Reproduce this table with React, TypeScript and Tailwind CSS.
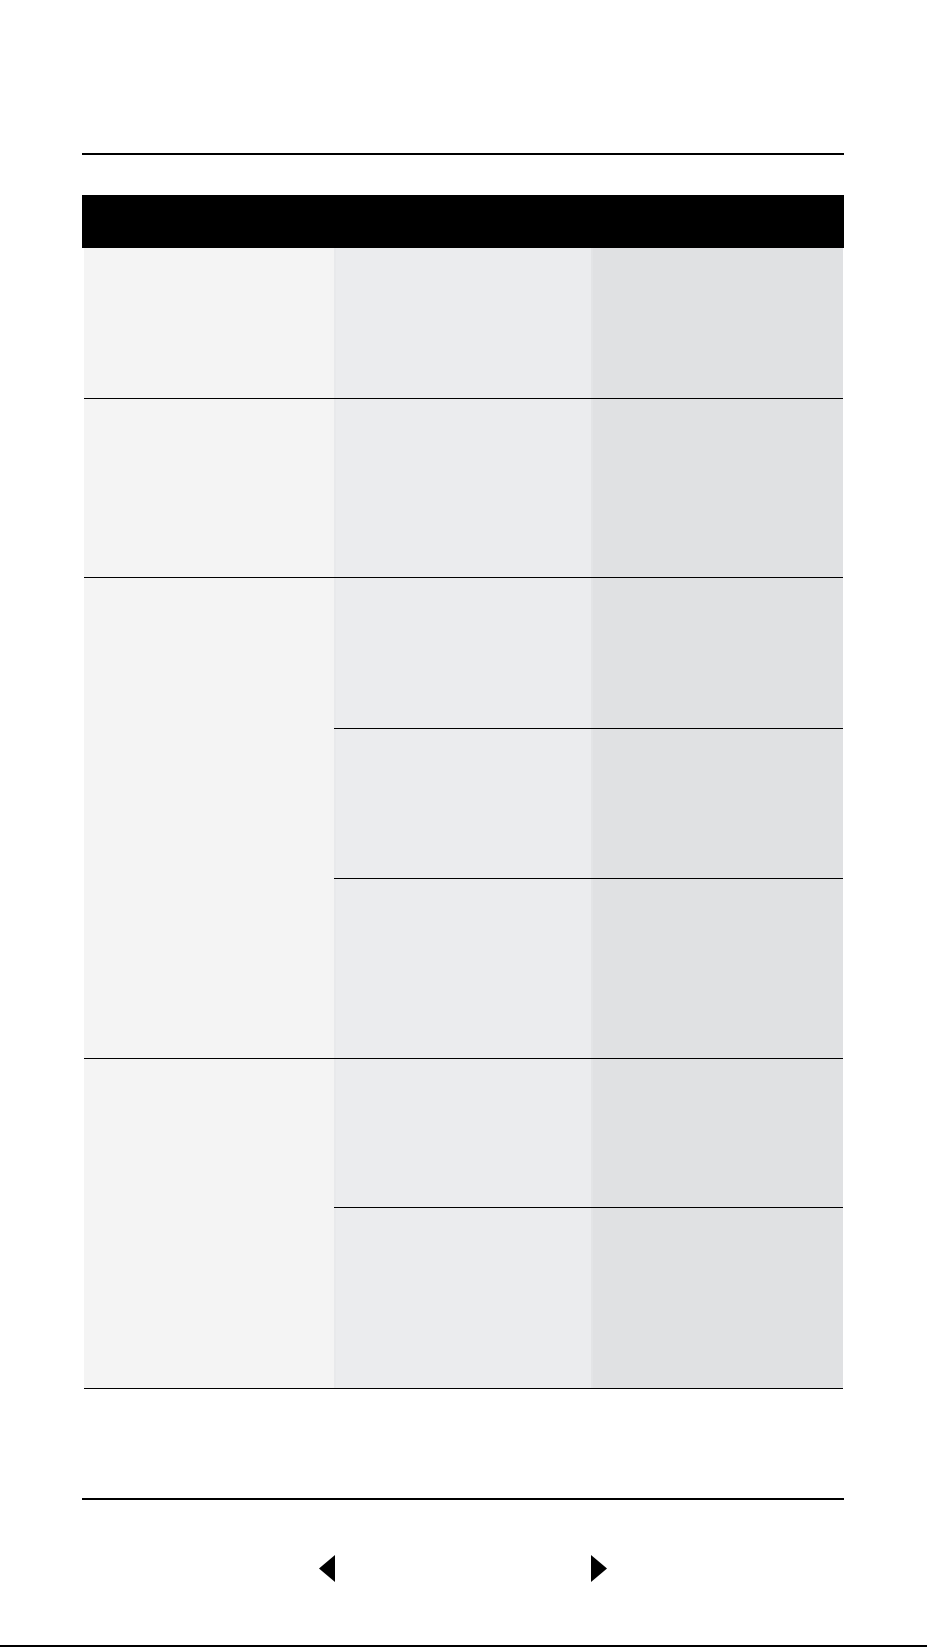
const col1 = "bg-[#f4f4f4]";
const col2 = "bg-[#ebecee]";
const col3 = "bg-[#e0e1e3]";

// heights of the sub rows in each group; the group's own bottom border adds 1px
const groups: string[][] = [
  ["h-[150px]"],
  ["h-[178px]"],
  ["h-[151px]", "h-[150px]", "h-[179px]"],
  ["h-[149px]", "h-[180px]"],
];

function Arrow({ dir }: { dir: "left" | "right" }) {
  return (
    <svg width="17" height="27" viewBox="0 0 17 27" className="block">
      {dir === "left" ? (
        <polygon points="16,0 16,27 0,13.5" fill="#000" />
      ) : (
        <polygon points="1,0 1,27 17,13.5" fill="#000" />
      )}
    </svg>
  );
}

export default function App() {
  return (
    <div className="min-h-[1647px] w-[927px] bg-white flex flex-col font-['Liberation_Sans',sans-serif]">
      <div className="ml-[82px] w-[762px] flex flex-col">
        <div className="mt-[153px] h-[2px] bg-black" />
        <div className="mt-[40px] h-[53px] bg-black" />
        <div className="ml-[2px] mr-[1px] flex flex-col">
          {groups.map((subs, gi) => (
            <div key={gi} className="flex border-b border-black">
              <div className={`w-[250px] ${col1}`} />
              <div className="flex-1 flex flex-col">
                {subs.map((h, si) => (
                  <div
                    key={si}
                    className={`flex ${h} ${si < subs.length - 1 ? "border-b border-black" : ""}`}
                  >
                    <div className={`w-[257px] ${col2} border-l-2 border-[#e8e9eb]`} />
                    <div className={`flex-1 ${col3} border-l-2 border-[#e3e4e6]`} />
                  </div>
                ))}
              </div>
            </div>
          ))}
        </div>
        <div className="mt-[109px] h-[2px] bg-black" />
      </div>
      <div className="mt-[55px] ml-[319px] flex items-center gap-[254px]">
        <Arrow dir="left" />
        <Arrow dir="right" />
      </div>
      <div className="mt-auto h-[2px] bg-black" />
    </div>
  );
}
